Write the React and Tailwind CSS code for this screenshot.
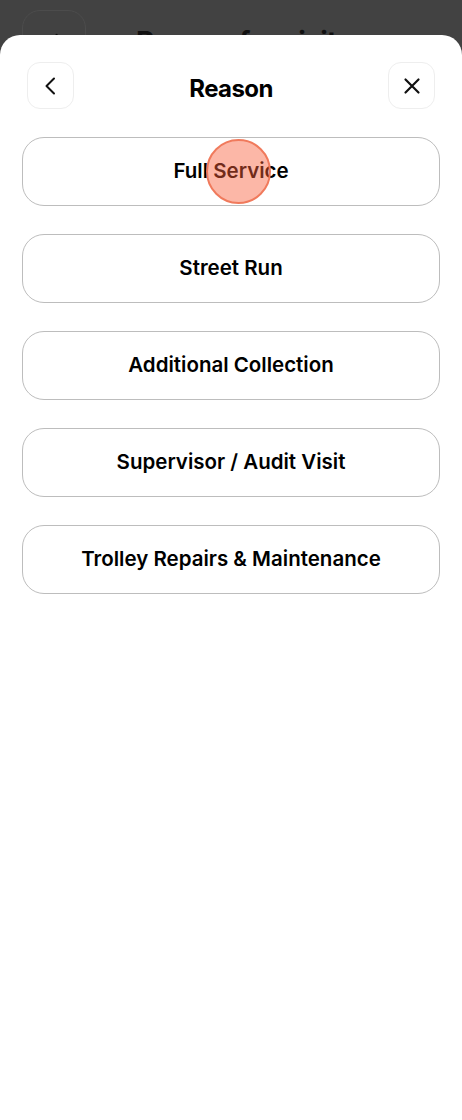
import React from "react";

const reasons = [
  "Full Service",
  "Street Run",
  "Additional Collection",
  "Supervisor / Audit Visit",
  "Trolley Repairs & Maintenance",
];

export default function App() {
  return (
    <div
      className="relative w-[462px] h-[1120px] overflow-hidden bg-[#424242]"
      style={{ fontFamily: "Inter, 'Noto Sans', sans-serif" }}
    >
      {/* underlying page (dimmed) */}
      <div className="flex items-center gap-[50px] pl-[22px] pt-[10px]">
        <div className="w-[64px] h-[64px] rounded-[18px] border border-[#4c4c4c] flex items-center justify-center">
          <svg width="22" height="22" viewBox="0 0 24 24" fill="none" stroke="#111" strokeWidth="2" strokeLinecap="round" strokeLinejoin="round">
            <path d="M15 4l-8 8 8 8" />
          </svg>
        </div>
        <div className="text-[28px] font-bold text-[#111] tracking-tight">Reason for visit</div>
      </div>

      {/* sheet */}
      <div className="absolute left-0 right-0 top-[35px] bottom-0 bg-white rounded-t-[20px]">
        <div className="flex items-center justify-between px-[27px] pt-[27px]">
          <button className="w-[47px] h-[47px] rounded-[13px] border border-[#eeeeee] bg-white flex items-center justify-center">
            <svg width="24" height="24" viewBox="0 0 24 24" fill="none" stroke="#111" strokeWidth="2" strokeLinecap="round" strokeLinejoin="round">
              <path d="M15 4.5l-7.5 7.5 7.5 7.5" />
            </svg>
          </button>
          <div className="mt-[6px] text-[24px] font-bold text-black tracking-tight">Reason</div>
          <button className="w-[47px] h-[47px] rounded-[13px] border border-[#eeeeee] bg-white flex items-center justify-center">
            <svg width="24" height="24" viewBox="0 0 24 24" fill="none" stroke="#111" strokeWidth="2.2" strokeLinecap="round">
              <path d="M5.5 5.5l13 13M18.5 5.5l-13 13" />
            </svg>
          </button>
        </div>

        <div className="flex flex-col gap-[28px] px-[22px] pt-[28px]">
          {reasons.map((r, i) => (
            <div
              key={r}
              className="relative h-[69px] rounded-[22px] border border-[#bdbdbd] flex items-center justify-center text-[20.5px] font-semibold text-black"
            >
              {r}
              {i === 0 && (
                <div className="absolute left-[183px] top-[1px] w-[65px] h-[65px] rounded-full bg-[#f8603c]/45 border-[2px] border-[#f07a5c]" />
              )}
            </div>
          ))}
        </div>
      </div>
    </div>
  );
}
